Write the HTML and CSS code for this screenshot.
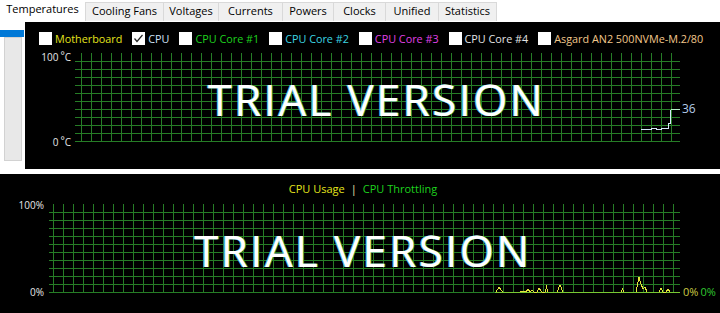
FILE: index.html
```html
<!DOCTYPE html>
<html>
<head>
<meta charset="utf-8">
<link rel="stylesheet" href="styles.css">
</head>
<body>
<div class="app">
  <div class="tabs">
    <div class="tab active w-temp">Temperatures</div>
    <div class="tab w-fans">Cooling Fans</div>
    <div class="tab w-volt">Voltages</div>
    <div class="tab w-curr">Currents</div>
    <div class="tab w-pow">Powers</div>
    <div class="tab w-clk">Clocks</div>
    <div class="tab w-uni">Unified</div>
    <div class="tab last w-stat">Statistics</div>
  </div>
  <div class="main">
    <div class="side">
      <div class="side-sel"></div>
      <div class="side-track"></div>
    </div>
    <div class="chart chart-top">
      <div class="legend">
        <div class="item"><span class="box"></span><span class="c-mb">Motherboard</span></div>
        <div class="item"><span class="box checked"><svg width="13" height="13" viewBox="0 0 13 13"><polyline points="2.5,6.5 5,9.5 10.5,3" fill="none" stroke="#222" stroke-width="1.2"/></svg></span><span class="c-cpu">CPU</span></div>
        <div class="item"><span class="box"></span><span class="c-c1">CPU Core #1</span></div>
        <div class="item"><span class="box"></span><span class="c-c2">CPU Core #2</span></div>
        <div class="item"><span class="box"></span><span class="c-c3">CPU Core #3</span></div>
        <div class="item"><span class="box"></span><span class="c-c4">CPU Core #4</span></div>
        <div class="item"><span class="box"></span><span class="c-ssd">Asgard AN2 500NVMe-M.2/80</span></div>
      </div>
      <div class="plot-row">
        <div class="axis">
          <span class="ax-label ax-top">100<span class="deg">°</span>C</span>
          <span class="ax-label ax-bot">0<span class="deg">°</span>C</span>
        </div>
        <div class="grid grid-top">
          <svg class="plot-svg" width="605" height="89" viewBox="0 0 605 89">
            <path class="gridline" d="M0 8.5H605M0 16.5H605M0 24.5H605M0 32.5H605M0 40.5H605M0 48.5H605M0 56.5H605M0 64.5H605M0 72.5H605M0 80.5H605M0 88.5H605"/>
            <path class="gridline" d="M6.5 0V89M16.5 0V89M26.5 0V89M36.5 0V89M46.5 0V89M56.5 0V89M66.5 0V89M76.5 0V89M86.5 0V89M96.5 0V89M106.5 0V89M116.5 0V89M126.5 0V89M136.5 0V89M146.5 0V89M156.5 0V89M166.5 0V89M176.5 0V89M186.5 0V89M196.5 0V89M206.5 0V89M216.5 0V89M226.5 0V89M236.5 0V89M246.5 0V89M256.5 0V89M266.5 0V89M276.5 0V89M286.5 0V89M296.5 0V89M306.5 0V89M316.5 0V89M326.5 0V89M336.5 0V89M346.5 0V89M356.5 0V89M366.5 0V89M376.5 0V89M386.5 0V89M396.5 0V89M406.5 0V89M416.5 0V89M426.5 0V89M436.5 0V89M446.5 0V89M456.5 0V89M466.5 0V89M476.5 0V89M486.5 0V89M496.5 0V89M506.5 0V89M516.5 0V89M526.5 0V89M536.5 0V89M546.5 0V89M556.5 0V89M566.5 0V89M576.5 0V89M586.5 0V89M596.5 0V89"/>
            <polyline points="566,76.5 576,76.5 576,75.5 581,75.5 581,76.5 586,76.5 586,75.5 593.5,75.5 593.5,70 595.5,70 595.5,56.5" fill="none" stroke="#d6e8f8" stroke-width="1"/>
            <polyline points="595.5,56.5 605,56.5" fill="none" stroke="#b8f0c8" stroke-width="1"/>
          </svg>
        </div>
        <div class="vals">
          <span class="v36">36</span>
        </div>
      </div>
      <div class="watermark wm-top">TRIAL VERSION</div>
    </div>
  </div>
  <div class="chart chart-bottom">
    <div class="legend2"><span class="c-usage">CPU Usage</span><span class="sep">|</span><span class="c-thr">CPU Throttling</span></div>
    <div class="plot-row2">
      <div class="axis2">
        <span class="ax-label ax-top2">100%</span>
        <span class="ax-label ax-bot2">0%</span>
      </div>
      <div class="grid grid-bot">
        <svg class="plot-svg" width="631" height="89" viewBox="0 0 631 89">
          <defs>
            <pattern id="vb" x="0" y="0" width="10" height="89" patternUnits="userSpaceOnUse">
              <rect x="4" y="0" width="1" height="89" fill="#267d26"/>
            </pattern>
            <pattern id="hb" x="0" y="0" width="631" height="8" patternUnits="userSpaceOnUse">
              <rect x="0" y="0" width="631" height="1" fill="#267d26"/>
            </pattern>
          </defs>
          <rect x="0" y="0" width="631" height="89" fill="url(#vb)"/>
          <rect x="0" y="8" width="631" height="81" fill="url(#hb)"/>
          <polyline points="446,88.5 631,88.5" fill="none" stroke="#78c832" stroke-width="1"/>
          <polyline points="447,88 450,83 452,86 454,88" fill="none" stroke="#e4e43c" stroke-width="1"/>
          <polyline points="471,88 472,87 476,87 477,88 479,85 481,88 483,86 485,88 488,88 490,84 493,88 496,88 497.5,83 499,88" fill="none" stroke="#e4e43c" stroke-width="1"/>
          <polyline points="508,88 511,81 514,88" fill="none" stroke="#e4e43c" stroke-width="1"/>
          <polyline points="572,88 573.5,85 575,88" fill="none" stroke="#e4e43c" stroke-width="1"/>
          <polyline points="587,88 590,73 592,80 594,85 596,83 598,88" fill="none" stroke="#e4e43c" stroke-width="1"/>
          <polyline points="610,88 612,84 614,88 617,88 619,85 621,88" fill="none" stroke="#e4e43c" stroke-width="1"/>
        </svg>
      </div>
      <div class="vals2">
        <span class="c-v1">0%</span><span class="c-v2">0%</span>
      </div>
    </div>
    <div class="watermark wm-bot">TRIAL VERSION</div>
  </div>
</div>
</body>
</html>
```

FILE: styles.css
```css
html, body {
  margin: 0;
  padding: 0;
  background: #ffffff;
}

body {
  width: 720px;
  height: 313px;
  overflow: hidden;
  font-family: "Open Sans", "Noto Sans", sans-serif;
  font-size: 11px;
}

.app {
  width: 720px;
  height: 313px;
}

/* Tabs */
.tabs {
  display: flex;
  align-items: flex-start;
  height: 22px;
  background: #ffffff;
}

.tab {
  margin-top: 2px;
  height: 19px;
  box-sizing: border-box;
  padding: 0;
  text-align: center;
  line-height: 16px;
  background: #f0f0f0;
  border-top: 1px solid #d9d9d9;
  border-left: 1px solid #d9d9d9;
  color: #000;
  white-space: nowrap;
}

.tab.last {
  border-right: 1px solid #d9d9d9;
}

.tab.active {
  margin-top: 0;
  height: 22px;
  padding: 1px 0 0 0;
  line-height: 15px;
  background: #ffffff;
  border: none;
}

.w-temp { width: 85px; }
.w-fans { width: 78px; }
.w-volt { width: 55px; }
.w-curr { width: 64px; }
.w-pow { width: 51px; }
.w-clk { width: 52px; }
.w-uni { width: 53px; }
.w-stat { width: 59px; }

/* Main area */
.main {
  display: flex;
  height: 147px;
}

.side {
  width: 25px;
  flex: none;
  background: #ffffff;
}

.side-sel {
  margin-top: 8px;
  width: 24px;
  height: 7px;
  background: #0078d7;
}

.side-track {
  margin-left: 4px;
  width: 18px;
  height: 124px;
  box-sizing: border-box;
  background: #e8e8e8;
  border: 1px solid #d2d2d2;
}

.chart {
  position: relative;
  background: #000000;
  color: #e0e0e0;
}

.chart-top {
  flex: 1;
}

/* Legend */
.legend {
  display: flex;
  align-items: center;
  gap: 10px;
  padding: 10px 0 0 14px;
  height: 13px;
  font-size: 10.8px;
}

.item {
  display: flex;
  align-items: center;
  gap: 3px;
  white-space: nowrap;
  line-height: 13px;
}

.box {
  width: 13px;
  height: 13px;
  background: #ffffff;
  flex: none;
  display: block;
}

.box svg {
  display: block;
}

.c-mb { color: #e4e41c; }
.c-cpu { color: #cfe2f6; }
.c-c1 { color: #1ed21e; }
.c-c2 { color: #3cd6e2; }
.c-c3 { color: #e040e6; }
.c-c4 { color: #e4e4e4; }
.c-ssd { color: #f2c88c; }

/* Plot */
.plot-row {
  display: flex;
  margin-top: 8px;
  height: 89px;
}

.axis {
  position: relative;
  width: 50px;
  flex: none;
}

.ax-label {
  position: absolute;
  font-size: 10px;
  line-height: 14px;
  color: #e6e6e6;
  white-space: nowrap;
}

.deg {
  margin-left: 2px;
  vertical-align: 2px;
}

.ax-top { right: 4px; top: -5px; }
.ax-bot { right: 4px; top: 80px; }

.grid {
  position: relative;
  flex: none;
  height: 89px;
}

.grid-top {
  width: 605px;
}

.grid-bot {
  width: 631px;
}

.plot-svg {
  position: absolute;
  left: 0;
  top: 0;
  display: block;
  overflow: visible;
  shape-rendering: crispEdges;
}

.gridline {
  fill: none;
  stroke: #267d26;
  stroke-width: 1;
}

.vals {
  position: relative;
  flex: 1;
}

.v36 {
  position: absolute;
  left: 2px;
  top: 48px;
  font-size: 12px;
  line-height: 16px;
  color: #b4cdea;
}

/* Watermark */
.watermark {
  position: absolute;
  left: 0;
  right: 0;
  text-align: center;
  font-family: "Open Sans", "Noto Sans", sans-serif;
  font-size: 44px;
  line-height: 44px;
  letter-spacing: 2.3px;
  color: #ffffff;
  text-shadow: -1px 0 0 #5ab4d8, 1px 0 0 #1f8f2a;
  white-space: nowrap;
}

.wm-top {
  top: 55px;
  padding-left: 8px;
}

.wm-bot {
  top: 54px;
  padding-left: 6px;
}

/* Bottom chart */
.chart-bottom {
  margin-top: 5px;
  height: 139px;
}

.legend2 {
  padding: 7px 0 0 6px;
  line-height: 15px;
  text-align: center;
  white-space: nowrap;
}

.c-usage { color: #e4e41c; }
.c-thr { color: #1ed21e; }
.sep {
  color: #f0e4b0;
  margin: 0 6px;
}

.plot-row2 {
  display: flex;
  margin-top: 8px;
  height: 89px;
}

.axis2 {
  position: relative;
  width: 49px;
  flex: none;
}

.ax-top2 { right: 5px; top: -6px; }
.ax-bot2 { right: 5px; top: 81px; }

.vals2 {
  position: relative;
  flex: 1;
  padding-left: 3px;
  padding-top: 80px;
  line-height: 15px;
  font-size: 11px;
  white-space: nowrap;
}

.c-v1 { color: #cccc44; margin-right: 2px; }
.c-v2 { color: #30c830; }
```
